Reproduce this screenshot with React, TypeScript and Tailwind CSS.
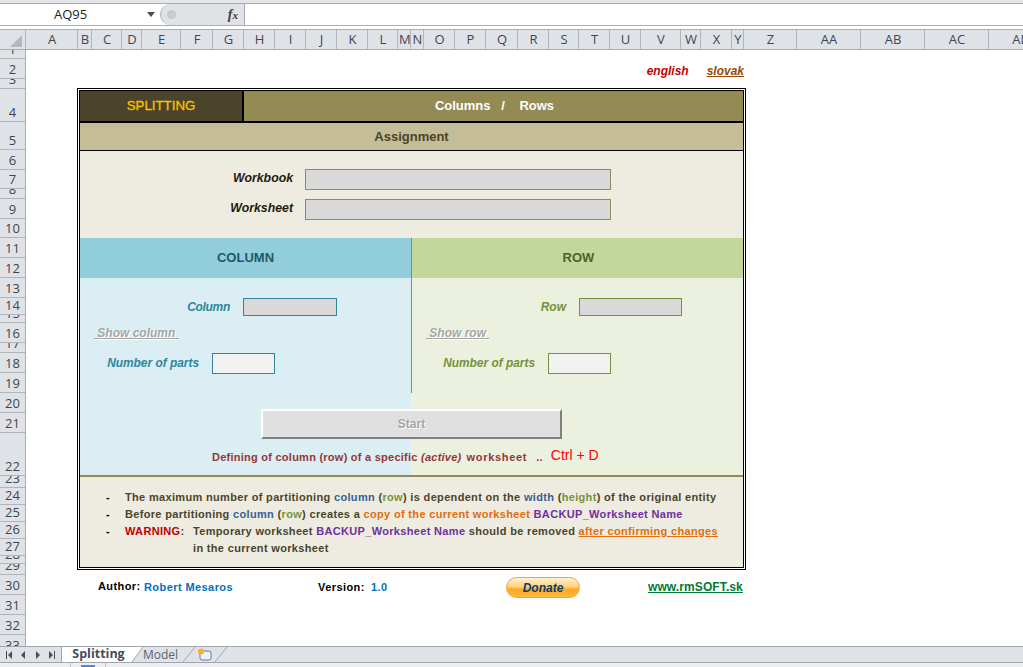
import React from "react";

const cols: [string, string][] = [
  ["A", "w-[52px]"], ["B", "w-[14px]"], ["C", "w-[30px]"], ["D", "w-[20px]"], ["E", "w-[39px]"],
  ["F", "w-[32px]"], ["G", "w-[31px]"], ["H", "w-[31px]"], ["I", "w-[31px]"], ["J", "w-[31px]"],
  ["K", "w-[31px]"], ["L", "w-[30px]"], ["M", "w-[13px]"], ["N", "w-[13px]"], ["O", "w-[31px]"],
  ["P", "w-[31px]"], ["Q", "w-[32px]"], ["R", "w-[31px]"], ["S", "w-[30px]"], ["T", "w-[31px]"],
  ["U", "w-[31px]"], ["V", "w-[40px]"], ["W", "w-[20px]"], ["X", "w-[31px]"], ["Y", "w-[12px]"],
  ["Z", "w-[53px]"], ["AA", "w-[64px]"], ["AB", "w-[64px]"], ["AC", "w-[64px]"], ["AD", "w-[64px]"],
];

const rows: [string, string][] = [
  ["1", "h-[9px]"], ["2", "h-[20px]"], ["3", "h-[10px]"], ["4", "h-[33px]"], ["5", "h-[28px]"],
  ["6", "h-[20px]"], ["7", "h-[19px]"], ["8", "h-[10px]"], ["9", "h-[20px]"], ["10", "h-[19px]"],
  ["11", "h-[20px]"], ["12", "h-[20px]"], ["13", "h-[20px]"], ["14", "h-[17px]"], ["15", "h-[8px]"],
  ["16", "h-[20px]"], ["17", "h-[10px]"], ["18", "h-[20px]"], ["19", "h-[20px]"], ["20", "h-[20px]"],
  ["21", "h-[20px]"], ["22", "h-[43px]"], ["23", "h-[12px]"], ["24", "h-[17px]"], ["25", "h-[17px]"],
  ["26", "h-[17px]"], ["27", "h-[17px]"], ["28", "h-[8px]"], ["29", "h-[11px]"], ["30", "h-[20px]"],
  ["31", "h-[20px]"], ["32", "h-[20px]"], ["33", "h-[20px]"],
];

const Blue = ({ children }: { children: React.ReactNode }) => <span className="text-[#376092]">{children}</span>;
const Green = ({ children }: { children: React.ReactNode }) => <span className="text-[#76923c]">{children}</span>;
const Purple = ({ children }: { children: React.ReactNode }) => <span className="text-[#7030a0]">{children}</span>;
const Orange = ({ children }: { children: React.ReactNode }) => <span className="text-[#e46c0a]">{children}</span>;

function FormulaBar() {
  return (
    <>
      <div className="h-[4px] shrink-0 border-b border-[#a9adb3] bg-[#e4e6e9]" />
      <div className="flex h-[22px] shrink-0 border-b border-[#a9adb3] bg-white font-['Open_Sans',sans-serif]">
        <div className="relative flex w-[160px] items-center pl-[54px] pt-px text-[13px] text-[#222]">
          AQ95
          <svg className="absolute left-[147px] top-[8px]" width="8" height="5" viewBox="0 0 8 5">
            <path d="M0 0H8L4 5Z" fill="#4a4f57" />
          </svg>
        </div>
        <div className="flex w-[85px] items-center justify-between rounded-l-[11px] border-x border-[#a9adb3] bg-[#dfe3e8] pl-[6px] pr-[6px]">
          <div className="h-[9px] w-[9px] rounded-full border border-[#c4c8cd] bg-[#c9cdd2]" />
          <span className="font-['Liberation_Serif',serif] text-[14px] font-bold italic leading-none text-[#3c3c3c]">
            f<span className="text-[11px]">x</span>
          </span>
        </div>
        <div className="flex-1 bg-white" />
      </div>
      <div className="h-[3px] shrink-0 bg-white" />
    </>
  );
}

function ColumnHeader() {
  return (
    <div className="flex h-[21px] shrink-0 border-y border-[#a9adb3] bg-[#dfe3e8] font-['Open_Sans',sans-serif] text-[13px] leading-[19px] text-[#3f4651]">
      <div className="relative w-[26px] shrink-0 border-r border-[#b1b5ba]">
        <svg className="absolute left-[10px] top-[5px]" width="12" height="12" viewBox="0 0 12 12">
          <path d="M12 0V12H0Z" fill="#b4b8bd" />
        </svg>
      </div>
      {cols.map(([label, w]) => (
        <div key={label} className={`${w} shrink-0 overflow-hidden border-r border-[#b1b5ba] pl-px text-center`}>
          {label}
        </div>
      ))}
    </div>
  );
}

function RowHeader() {
  return (
    <div className="w-[26px] shrink-0 overflow-hidden border-r border-[#a9adb3] bg-[#dfe3e8] font-['Open_Sans',sans-serif] text-[13px] leading-[18px] text-[#3f4651]">
      {rows.map(([label, h]) => (
        <div key={label} className={`${h} flex items-end justify-center overflow-hidden border-b border-[#b1b5ba]`}>
          <span className="shrink-0">{label}</span>
        </div>
      ))}
    </div>
  );
}

function Panel() {
  return (
    <div className="ml-[51px] h-[482px] w-[669px] shrink-0 border border-black bg-white p-px">
      <div className="flex h-full flex-col border border-black text-[13px] font-bold">
        {/* title */}
        <div className="flex h-[32px] shrink-0 border-b-2 border-black bg-[#948a54]">
          <div className="flex w-[164px] items-center justify-center border-r-2 border-black bg-[#4a442a] text-[13.3px] font-normal text-[#ffc000] [-webkit-text-stroke:0.3px_#ffc000]">
            SPLITTING
          </div>
          <div className="flex flex-1 items-center justify-center whitespace-pre pl-[2px] text-white">Columns   /    Rows</div>
        </div>
        <div className="flex h-[28px] shrink-0 items-center justify-center border-b border-black bg-[#c4bd97] text-[#4a442a]">
          Assignment
        </div>
        {/* assignment */}
        <div className="h-[87px] shrink-0 bg-[#eeece1] pt-[18px] text-[12.3px] italic text-[#1d1b10]">
          <div className="flex h-[21px] items-center">
            <div className="w-[213px] pb-[2px] text-right">Workbook</div>
            <div className="ml-[12px] h-[21px] w-[306px] border border-[#948a54] bg-[#d9d9d9]" />
          </div>
          <div className="mt-[9px] flex h-[21px] items-center">
            <div className="w-[213px] pb-[2px] text-right">Worksheet</div>
            <div className="ml-[12px] h-[21px] w-[306px] border border-[#948a54] bg-[#d9d9d9]" />
          </div>
        </div>
        {/* two columns */}
        <div className="flex h-[155px] shrink-0">
          <div className="w-[331px] bg-[#daeef3]">
            <div className="flex h-[40px] items-center justify-center bg-[#92cddc] text-[#215968]">COLUMN</div>
            <div className="mt-[20px] flex h-[18px] items-center text-[12px] italic tracking-[-0.3px] text-[#31859c]">
              <div className="w-[150px] text-right">Column</div>
              <div className="ml-[13px] h-[18px] w-[94px] border border-[#31859c] bg-[#d9d9d9]" />
            </div>
            <div className="ml-[14px] mt-[8px] h-[20px] whitespace-pre text-[12px] italic leading-[18px] text-[#a6a6a6] underline [text-shadow:1px_1px_0_#ffffff]">
              {" Show column "}
            </div>
            <div className="mt-[9px] flex h-[21px] items-center text-[11.9px] italic text-[#31859c]">
              <div className="w-[119px] text-right">Number of parts</div>
              <div className="ml-[13px] h-[21px] w-[63px] border border-[#31859c] bg-[#f2f2f2]" />
            </div>
          </div>
          <div className="flex-1 border-l border-[#948a54] bg-[#ebf1de]">
            <div className="flex h-[40px] items-center justify-center bg-[#c3d69b] pl-[2px] text-[#4f6228]">ROW</div>
            <div className="mt-[20px] flex h-[18px] items-center text-[12px] italic text-[#76923c]">
              <div className="w-[154px] text-right">Row</div>
              <div className="ml-[13px] h-[18px] w-[103px] border border-[#76923c] bg-[#d9d9d9]" />
            </div>
            <div className="ml-[14px] mt-[8px] h-[20px] whitespace-pre text-[12px] italic leading-[18px] text-[#a6a6a6] underline [text-shadow:1px_1px_0_#ffffff]">
              {" Show row "}
            </div>
            <div className="mt-[9px] flex h-[21px] items-center text-[11.9px] italic text-[#76923c]">
              <div className="w-[123px] text-right">Number of parts</div>
              <div className="ml-[13px] h-[21px] w-[63px] border border-[#76923c] bg-[#f2f2f2]" />
            </div>
          </div>
        </div>
        {/* start */}
        <div className="h-[82px] shrink-0 bg-[linear-gradient(90deg,#daeef3_331px,#ebf1de_331px)] pt-[16px]">
          <div className="ml-[181px] flex h-[30px] w-[301px] items-center justify-center border-2 border-b-[#808080] border-l-white border-r-[#808080] border-t-white bg-[#e0e0e0] text-[12px] text-[#a6a6a6] [text-shadow:1px_1px_0_#ffffff]">
            Start
          </div>
          <div className="ml-[132px] mt-[8px] flex h-[20px] items-center whitespace-pre text-[11px] tracking-[0.25px] text-[#953735]">
            <span>Defining of column (row) of a specific </span>
            <span className="italic">(active)</span>
            <span className="ml-[5px] tracking-[0.7px]">worksheet</span>
            <span className="ml-[9px]">..</span>
            <span className="mb-[3px] ml-[8px] text-[14px] font-normal tracking-normal text-[#ff0000]">Ctrl + D</span>
          </div>
        </div>
        {/* notes */}
        <div className="flex-1 border-t-2 border-[#948a54] bg-[#eeece1] pl-[26px] pt-[12px] text-[11px] leading-[17px] tracking-[0.33px] text-[#4a442a]">
          <div className="flex h-[17px]">
            <div className="w-[19px] text-black">-</div>
            <div>
              The maximum number of partitioning <Blue>column</Blue> (<Green>row</Green>) is dependent on the{" "}
              <Blue>width</Blue> (<Green>height</Green>) of the original entity
            </div>
          </div>
          <div className="flex h-[17px]">
            <div className="w-[19px] text-black">-</div>
            <div>
              Before partitioning <Blue>column</Blue> (<Green>row</Green>) creates a{" "}
              <Orange>copy of the current worksheet</Orange> <Purple>BACKUP_Worksheet Name</Purple>
            </div>
          </div>
          <div className="flex h-[17px]">
            <div className="w-[19px] text-black">-</div>
            <div className="w-[68px]">
              <span className="text-[#c00000]">WARNING</span>:
            </div>
            <div>
              Temporary worksheet <Purple>BACKUP_Worksheet Name</Purple> should be removed{" "}
              <span className="text-[#e46c0a] underline">after confirming changes</span>
            </div>
          </div>
          <div className="h-[17px] pl-[87px]">in the current worksheet</div>
        </div>
      </div>
    </div>
  );
}

function Footer() {
  return (
    <div className="mt-[7px] flex h-[21px] shrink-0 items-center pl-[72px] text-[11px] font-bold tracking-[0.42px]">
      <div className="w-[46px] pb-[2px] text-black">Author:</div>
      <div className="w-[174px] text-[#0070c0]">Robert Mesaros</div>
      <div className="w-[53px] text-black">Version:</div>
      <div className="w-[135px] text-[#0070c0]">1.0</div>
      <div className="flex h-[21px] w-[74px] items-center justify-center rounded-full border border-[#f7a035] bg-[linear-gradient(180deg,#fff3d6_0%,#ffd27a_45%,#ffa822_60%,#ffb83f_100%)] text-[12px] italic tracking-normal text-[#0b3b72]">
        Donate
      </div>
      <div className="ml-[68px] pb-[2px] text-[12px] tracking-[0.1px] text-[#007a33] underline">www.rmSOFT.sk</div>
    </div>
  );
}

function Arrow({ kind }: { kind: "first" | "prev" | "next" | "last" }) {
  const d = {
    first: "M1 0V8H2V0ZM7 0L3 4L7 8Z",
    prev: "M6 0L2 4L6 8Z",
    next: "M2 0L6 4L2 8Z",
    last: "M7 0V8H6V0ZM1 0L5 4L1 8Z",
  }[kind];
  return (
    <svg width="8" height="8" viewBox="0 0 8 8">
      <path d={d} fill="#4a4f57" />
    </svg>
  );
}

function TabStrip() {
  return (
    <div className="relative flex h-[17px] shrink-0 border-y border-[#a2a6ac] bg-[#dfe3e8] font-['Open_Sans',sans-serif]">
      <div className="flex w-[62px] items-center justify-between border-r border-[#a2a6ac] px-[5px]">
        <Arrow kind="first" />
        <Arrow kind="prev" />
        <Arrow kind="next" />
        <Arrow kind="last" />
      </div>
      <div className="flex w-[70px] items-center justify-center bg-white pl-[3px] text-[12.5px] font-bold leading-none text-[#444c58]">
        Splitting
      </div>
      <div className="ml-[11px] w-[33px] text-[12px] leading-[15px] text-[#5a6472]">Model</div>
      <svg className="ml-[21px] mt-[1px]" width="15" height="13" viewBox="0 0 15 13">
        <rect x="3" y="3" width="11" height="9" rx="2" fill="#eef3fb" stroke="#5b7faa" />
        <circle cx="4" cy="3.5" r="3" fill="#f2b33a" />
      </svg>
      <svg className="absolute left-[125px] top-0" width="110" height="15" viewBox="0 0 110 15">
        <path d="M0 15H7L18 0H7Z" fill="#ffffff" />
        <path d="M7 15L18 0M58 15L70 0M90 15L102 0" stroke="#a2a6ac" fill="none" />
      </svg>
    </div>
  );
}

function StatusBar() {
  return (
    <div className="flex flex-1 bg-[#eceef1]">
      <div className="ml-[70px] flex w-[36px] justify-center border-x border-[#c4c8cd]">
        <div className="mt-[2px] h-[3px] w-[14px] bg-[#5b85c4]" />
      </div>
    </div>
  );
}

export default function App() {
  return (
    <div className="flex h-[667px] w-[1023px] flex-col overflow-hidden bg-white font-['Liberation_Sans',Arial,sans-serif]">
      <FormulaBar />
      <ColumnHeader />
      <div className="flex h-[596px] shrink-0 overflow-hidden">
        <RowHeader />
        <div className="flex flex-1 flex-col">
          <div className="ml-[51px] flex h-[38px] w-[669px] shrink-0 justify-end gap-[18px] pr-[2px] pt-[14px] text-[12px] font-bold italic leading-[14px]">
            <span className="text-[#c00000]">english</span>
            <span className="text-[#984806] underline">slovak</span>
          </div>
          <Panel />
          <Footer />
        </div>
      </div>
      <TabStrip />
      <StatusBar />
    </div>
  );
}
